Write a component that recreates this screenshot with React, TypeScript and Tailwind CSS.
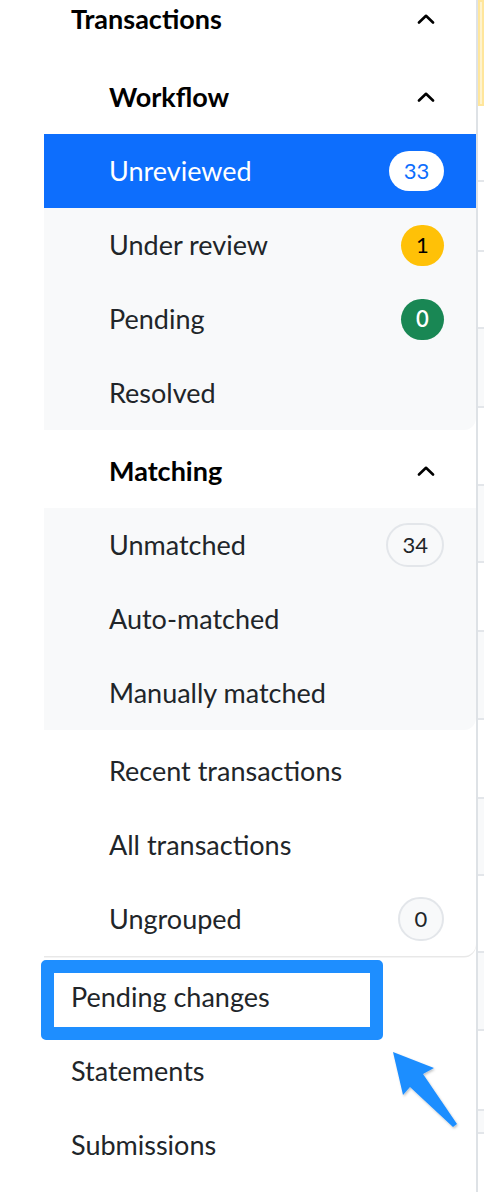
import React from 'react';

type BadgeKind = 'inverse' | 'warning' | 'success' | 'outline';

type Item = {
  label: string;
  badge?: string;
  kind?: BadgeKind;
  active?: boolean;
};

const workflow: Item[] = [
  { label: 'Unreviewed', badge: '33', kind: 'inverse', active: true },
  { label: 'Under review', badge: '1', kind: 'warning' },
  { label: 'Pending', badge: '0', kind: 'success' },
  { label: 'Resolved' },
];

const matching: Item[] = [
  { label: 'Unmatched', badge: '34', kind: 'outline' },
  { label: 'Auto-matched' },
  { label: 'Manually matched' },
];

const other: Item[] = [
  { label: 'Recent transactions' },
  { label: 'All transactions' },
  { label: 'Ungrouped', badge: '0', kind: 'outline' },
];

// stripes of the table peeking out on the right
const tableRows = [
  { h: 'h-[70px]', grey: false },
  { h: 'h-[77px]', grey: false },
  { h: 'h-[79px]', grey: true },
  { h: 'h-[78px]', grey: false },
  { h: 'h-[77px]', grey: true },
  { h: 'h-[69px]', grey: false },
  { h: 'h-[88px]', grey: true },
  { h: 'h-[79px]', grey: false },
  { h: 'h-[77px]', grey: true },
  { h: 'h-[77px]', grey: false },
  { h: 'h-[78px]', grey: true },
  { h: 'h-[80px]', grey: false },
  { h: 'h-[23px]', grey: true },
  { h: 'h-[60px]', grey: false },
];

function ChevronUp() {
  return (
    <svg width="18" height="10" viewBox="0 0 18 10" fill="none" stroke="#000" strokeWidth="2.6" strokeLinecap="round" strokeLinejoin="round">
      <polyline points="2,8.5 9,1.8 16,8.5" />
    </svg>
  );
}

function Badge({ value, kind }: { value: string; kind: BadgeKind }) {
  const base = 'flex items-center justify-center rounded-full text-[22px] leading-none';
  if (kind === 'inverse') {
    return <span className={`${base} h-[40px] min-w-[55px] px-[14px] bg-white text-[#0d6efd]`}>{value}</span>;
  }
  if (kind === 'warning') {
    return <span className={`${base} h-[41px] w-[43px] bg-[#ffc107] text-black`}>{value}</span>;
  }
  if (kind === 'success') {
    return <span className={`${base} h-[41px] w-[43px] bg-[#198754] text-white font-semibold`}>{value}</span>;
  }
  return (
    <span className={`${base} h-[44px] min-w-[46px] px-[14px] border-2 border-[#e3e6ea] bg-[#f8f9fa] text-[#212529]`}>
      {value}
    </span>
  );
}

function NavItem({ item }: { item: Item }) {
  return (
    <div
      className={`flex h-[74px] items-center justify-between pl-[65px] pr-[32px] text-[27px] ${
        item.active ? 'bg-[#0d6efd] text-white' : 'text-[#212529]'
      }`}
    >
      <span>{item.label}</span>
      {item.badge && item.kind && <Badge value={item.badge} kind={item.kind} />}
    </div>
  );
}

function GroupHeader({ label }: { label: string }) {
  return (
    <div className="mt-1 flex h-[74px] items-center justify-between pl-[65px] pr-[41px] text-[27px] font-bold text-black">
      <span>{label}</span>
      <ChevronUp />
    </div>
  );
}

export default function App() {
  return (
    <div className="relative flex h-[1192px] w-[484px] overflow-hidden bg-white font-['Lato',sans-serif]">
      <nav className="flex w-[476px] shrink-0 flex-col">
        <div className="-mt-[18px] flex h-[74px] items-center justify-between pl-[71px] pr-[41px] text-[27px] font-bold text-black">
          <span>Transactions</span>
          <ChevronUp />
        </div>

        <div className="ml-[44px] rounded-br-[12px] bg-white shadow-[0_1.5px_0_rgba(0,0,0,0.09)]">
          <GroupHeader label="Workflow" />
          <div className="rounded-br-[12px] bg-[#f8f9fa]">
            {workflow.map((it) => (
              <NavItem key={it.label} item={it} />
            ))}
          </div>

          <GroupHeader label="Matching" />
          <div className="rounded-br-[12px] bg-[#f8f9fa]">
            {matching.map((it) => (
              <NavItem key={it.label} item={it} />
            ))}
          </div>

          <div className="mt-1">
            {other.map((it) => (
              <NavItem key={it.label} item={it} />
            ))}
          </div>
        </div>

        <div className="relative mt-1 flex h-[74px] items-center pl-[71px] text-[27px] text-[#212529]">
          <span>Pending changes</span>
          {/* annotation box */}
          <div className="pointer-events-none absolute left-[41px] top-0 h-[80px] w-[342px] rounded-[5px] border-[13px] border-[#1e8eff]" />
        </div>
        <div className="flex h-[74px] items-center pl-[71px] text-[27px] text-[#212529]">Statements</div>
        <div className="flex h-[74px] items-center pl-[71px] text-[27px] text-[#212529]">Submissions</div>
      </nav>

      <main className="flex flex-1 flex-col border-l-2 border-[#dee2e6]">
        <div className="h-[108px] border-2 border-[#ffe69c] bg-[#fff3cd]" />
        <div className="h-[75px]" />
        {tableRows.map((r, i) => (
          <div key={i} className={`${r.h} shrink-0 border-t-2 border-[#e3e6ea] ${r.grey ? 'bg-[#f8f9fa]' : 'bg-white'}`} />
        ))}
      </main>

      {/* annotation arrow */}
      <svg className="pointer-events-none absolute left-[380px] top-[1040px]" width="90" height="100" viewBox="380 1040 90 100">
        <defs>
          <filter id="sh" x="-20%" y="-20%" width="140%" height="140%">
            <feDropShadow dx="1" dy="1.5" stdDeviation="1.2" floodColor="#000" floodOpacity="0.25" />
          </filter>
        </defs>
        <polygon
          filter="url(#sh)"
          fill="#1e8eff"
          points="393,1052 434,1068 423,1074 457,1124 453,1127 410,1087 403,1095"
        />
      </svg>
    </div>
  );
}
